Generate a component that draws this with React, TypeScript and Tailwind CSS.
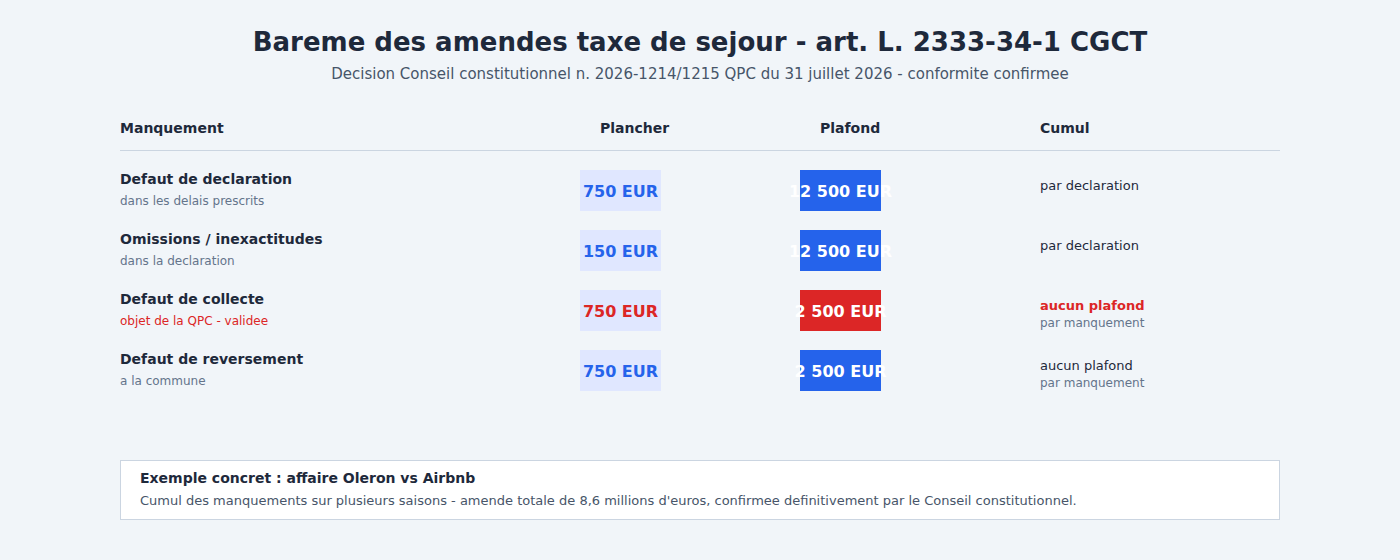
import React from "react";

type Row = {
  title: string;
  sub: string;
  subRed?: boolean;
  min: string;
  max: string;
  red?: boolean;
  cumul: string;
  cumulRed?: boolean;
  cumulSub?: string;
};

const rows: Row[] = [
  { title: "Defaut de declaration", sub: "dans les delais prescrits", min: "750 EUR", max: "12 500 EUR", cumul: "par declaration" },
  { title: "Omissions / inexactitudes", sub: "dans la declaration", min: "150 EUR", max: "12 500 EUR", cumul: "par declaration" },
  { title: "Defaut de collecte", sub: "objet de la QPC - validee", subRed: true, min: "750 EUR", max: "2 500 EUR", red: true, cumul: "aucun plafond", cumulRed: true, cumulSub: "par manquement" },
  { title: "Defaut de reversement", sub: "a la commune", min: "750 EUR", max: "2 500 EUR", cumul: "aucun plafond", cumulSub: "par manquement" },
];

export default function App() {
  return (
    <div
      className="w-[1400px] h-[560px] bg-[#f1f5f9] text-[#1e293b] px-[120px] pt-[24px]"
      style={{ fontFamily: '"DejaVu Sans", "Liberation Sans", sans-serif' }}
    >
      <h1 className="text-center text-[26px] leading-[36px] font-bold text-[#1e293b]">
        Bareme des amendes taxe de sejour - art. L. 2333-34-1 CGCT
      </h1>
      <p className="text-center text-[15px] leading-[20px] text-[#475569] mt-[4px]">
        Decision Conseil constitutionnel n. 2026-1214/1215 QPC du 31 juillet 2026 - conformite confirmee
      </p>

      <div className="mt-[34px] grid grid-cols-[460px_220px_240px_240px] h-[20px] items-center text-[14px] font-bold text-[#1e293b]">
        <div>Manquement</div>
        <div className="pl-[20px]">Plancher</div>
        <div className="pl-[20px]">Plafond</div>
        <div>Cumul</div>
      </div>
      <div className="mt-[12px] h-px bg-[#cbd5e1]" />

      <div className="mt-[9px]">
        {rows.map((r) => (
          <div key={r.title} className="grid grid-cols-[460px_220px_240px_240px] h-[60px] items-center">
            <div className="self-start pt-[11px] flex flex-col">
              <div className="text-[14px] leading-[17px] font-bold text-[#1e293b]">{r.title}</div>
              <div className={`text-[12px] leading-[15px] mt-[6px] ${r.subRed ? "text-[#dc2626]" : "text-[#64748b]"}`}>{r.sub}</div>
            </div>
            <div>
              <div className={`w-[81px] h-[41px] pt-[4px] bg-[#e0e7ff] flex items-center justify-center text-[16px] font-bold whitespace-nowrap ${r.red ? "text-[#dc2626]" : "text-[#2563eb]"}`}>
                {r.min}
              </div>
            </div>
            <div>
              <div className={`w-[81px] h-[41px] pt-[4px] flex items-center justify-center text-[16px] font-bold text-white whitespace-nowrap overflow-visible ${r.red ? "bg-[#dc2626]" : "bg-[#2563eb]"}`}>
                <span className="whitespace-nowrap">{r.max}</span>
              </div>
            </div>
            <div className="self-start pt-[18px] flex flex-col">
              <div className={`text-[13px] leading-[16px] ${r.cumulRed ? "font-bold text-[#dc2626]" : "text-[#1e293b]"}`}>{r.cumul}</div>
              {r.cumulSub && <div className="text-[12px] leading-[15px] mt-[2px] text-[#64748b]">{r.cumulSub}</div>}
            </div>
          </div>
        ))}
      </div>

      <div className="mt-[60px] h-[60px] bg-white border border-[#cbd5e1] px-[19px] pt-[9px]">
        <div className="text-[14px] leading-[17px] font-bold text-[#1e293b]">Exemple concret : affaire Oleron vs Airbnb</div>
        <div className="text-[13px] leading-[16px] mt-[6px] text-[#475569]">
          Cumul des manquements sur plusieurs saisons - amende totale de 8,6 millions d'euros, confirmee definitivement par le Conseil constitutionnel.
        </div>
      </div>
    </div>
  );
}
